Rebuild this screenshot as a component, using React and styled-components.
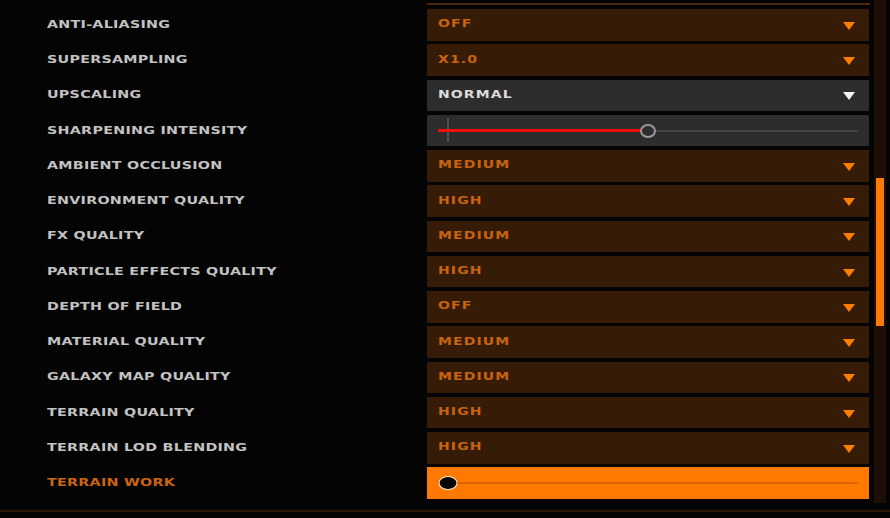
import React from 'react'
import styled, { createGlobalStyle } from 'styled-components'

const GlobalStyle = createGlobalStyle`
  html, body {
    margin: 0;
    padding: 0;
    background: #040404;
    width: 890px;
    height: 518px;
    overflow: hidden;
  }
`

const Screen = styled.div`
  width: 890px;
  height: 518px;
  display: flex;
  flex-direction: column;
  background: #040404;
  font-family: 'DejaVu Sans', 'Liberation Sans', sans-serif;
`

const Body = styled.div`
  height: 510px;
  display: grid;
  grid-template-columns: 1fr 16px;
`

const List = styled.div`
  display: flex;
  flex-direction: column;
  padding: 3px 4px 0 0;
`

const Cut = styled.div`
  height: 2px;
  margin-left: 427px;
  background: #4a2810;
  margin-bottom: 4px;
`

const Rows = styled.div`
  display: flex;
  flex-direction: column;
  gap: 3.77px;
`

const Row = styled.div`
  display: grid;
  grid-template-columns: 427px 442px;
  height: 31.5px;
  align-items: center;
`

const Label = styled.div`
  padding-left: 47px;
  padding-bottom: 1px;
  font-size: 11px;
  font-weight: bold;
  letter-spacing: 0.2px;
  color: ${p => (p.$active ? '#cc6410' : '#c2c2c2')};
  span {
    display: inline-block;
    transform: scaleX(1.3);
    transform-origin: left center;
    white-space: nowrap;
  }
`

const Box = styled.div`
  height: 100%;
  display: flex;
  align-items: center;
  justify-content: space-between;
  padding: 0 14px 0 11px;
  box-sizing: border-box;
  background: ${p =>
    p.$kind === 'orange' ? '#ff7800' : p.$kind === 'grey' ? '#2d2d2d' : '#361c07'};
`

const Value = styled.span`
  display: inline-block;
  transform: scaleX(1.4);
  transform-origin: left center;
  font-size: 10px;
  font-weight: bold;
  letter-spacing: 0.8px;
  padding-bottom: 2px;
  color: ${p => (p.$light ? '#dcdcdc' : '#c9630f')};
`

const Arrow = styled.span`
  width: 0;
  height: 0;
  border-left: 6.5px solid transparent;
  border-right: 6.5px solid transparent;
  border-top: 8px solid ${p => (p.$light ? '#f4f4f4' : '#ff7d00')};
  margin-top: 2px;
`

const Slider = styled.div`
  position: relative;
  flex: 1;
  height: 100%;
  margin-right: -3px;
`

const Track = styled.div`
  position: absolute;
  left: 0;
  right: 0;
  top: 50%;
  height: 2px;
  margin-top: -1px;
  background: ${p => p.$color};
`

const Fill = styled.div`
  position: absolute;
  left: 0;
  top: 50%;
  height: 3px;
  margin-top: -1.5px;
  background: #ee0e0e;
`

const Tick = styled.div`
  position: absolute;
  left: 9px;
  top: 3px;
  bottom: 4px;
  width: 2px;
  background: #4e4e4e;
`

const Knob = styled.div`
  position: absolute;
  top: 50%;
  transform: translate(-50%, -50%);
  width: ${p => p.$w}px;
  height: ${p => p.$h}px;
  border-radius: 50%;
  box-sizing: border-box;
  border: ${p => p.$border};
  background: ${p => p.$bg};
`

const Scroll = styled.div`
  width: 12px;
  height: 503px;
  background: #1d0f05;
  display: flex;
  flex-direction: column;
  align-items: center;
  padding-top: 178px;
  box-sizing: border-box;
`

const Thumb = styled.div`
  width: 8px;
  height: 148px;
  background: #ff7800;
`

const BottomLine = styled.div`
  height: 2px;
  background: #2c1808;
`

const rows = [
  ['ANTI-ALIASING', 'OFF'],
  ['SUPERSAMPLING', 'X1.0'],
  ['UPSCALING', 'NORMAL', 'grey'],
  ['SHARPENING INTENSITY', 0.5, 'slider'],
  ['AMBIENT OCCLUSION', 'MEDIUM'],
  ['ENVIRONMENT QUALITY', 'HIGH'],
  ['FX QUALITY', 'MEDIUM'],
  ['PARTICLE EFFECTS QUALITY', 'HIGH'],
  ['DEPTH OF FIELD', 'OFF'],
  ['MATERIAL QUALITY', 'MEDIUM'],
  ['GALAXY MAP QUALITY', 'MEDIUM'],
  ['TERRAIN QUALITY', 'HIGH'],
  ['TERRAIN LOD BLENDING', 'HIGH'],
  ['TERRAIN WORK', 0, 'active'],
]

function Control({ value, kind }) {
  if (kind === 'slider') {
    return (
      <Box $kind="grey">
        <Slider>
          <Tick />
          <Track $color="#444" />
          <Fill style={{ width: `${value * 100}%` }} />
          <Knob
            style={{ left: `${value * 100}%` }}
            $w={16}
            $h={14}
            $border="2px solid #9a9a9a"
            $bg="#2d2d2d"
          />
        </Slider>
      </Box>
    )
  }
  if (kind === 'active') {
    return (
      <Box $kind="orange">
        <Slider>
          <Track $color="#d96400" />
          <Knob
            style={{ left: `calc(${value * 100}% + 10px)` }}
            $w={19}
            $h={14}
            $border="1.5px solid #fff0e0"
            $bg="#050505"
          />
        </Slider>
      </Box>
    )
  }
  const light = kind === 'grey'
  return (
    <Box $kind={kind}>
      <Value $light={light}>{value}</Value>
      <Arrow $light={light} />
    </Box>
  )
}

export default function App() {
  return (
    <Screen>
      <GlobalStyle />
      <Body>
        <List>
          <Cut />
          <Rows>
            {rows.map(([label, value, kind]) => (
              <Row key={label}>
                <Label $active={kind === 'active'}>
                  <span>{label}</span>
                </Label>
                <Control value={value} kind={kind} />
              </Row>
            ))}
          </Rows>
        </List>
        <Scroll>
          <Thumb />
        </Scroll>
      </Body>
      <BottomLine />
    </Screen>
  )
}
